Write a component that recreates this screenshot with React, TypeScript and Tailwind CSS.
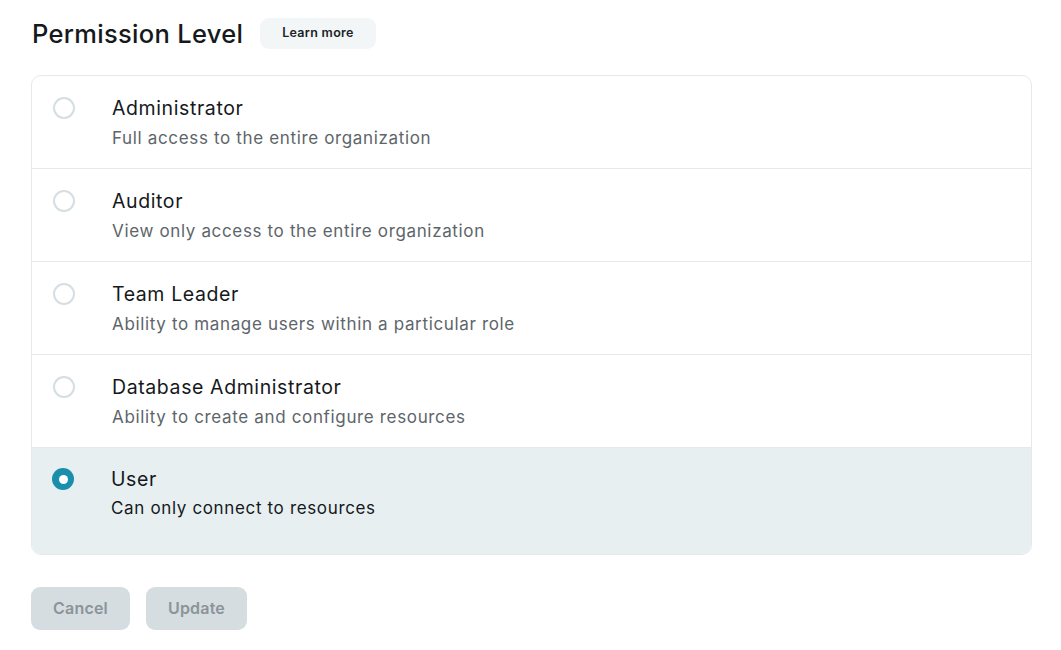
import React from "react";

const options = [
  { title: "Administrator", desc: "Full access to the entire organization" },
  { title: "Auditor", desc: "View only access to the entire organization" },
  { title: "Team Leader", desc: "Ability to manage users within a particular role" },
  { title: "Database Administrator", desc: "Ability to create and configure resources" },
  { title: "User", desc: "Can only connect to resources" },
];

export default function App() {
  const selected = 4;
  return (
    <div
      className="w-[1061px] h-[650px] bg-white pl-[31px] pr-[29px] pt-[18px]"
      style={{ fontFamily: "Inter, 'Noto Sans', sans-serif" }}
    >
      <div className="flex items-center h-[31px] gap-[17px] pl-[1px]">
        <h1 className="text-[25.5px] font-medium text-[#15191c] tracking-[0.3px] leading-none">
          Permission Level
        </h1>
        <button className="h-[31px] px-[22px] rounded-[9px] bg-[#f2f6f7] text-[12.5px] font-semibold text-[#1c2226] tracking-[0.3px]">
          Learn more
        </button>
      </div>

      <div className="mt-[26px] border border-[#e6e9ea] rounded-[10px] overflow-hidden">
        {options.map((o, i) => {
          const isSel = i === selected;
          const isLast = i === options.length - 1;
          return (
            <div
              key={o.title}
              className={`flex ${isLast ? "h-[106px]" : "h-[93px] border-b border-[#e6e9ea]"} ${
                isSel ? "bg-[#e7eff1] pl-[20px]" : "pl-[21px]"
              }`}
            >
              <div className={isSel ? "pt-[20px]" : "pt-[21px]"}>
                {isSel ? (
                  <div className="w-[22px] h-[22px] rounded-full bg-[#1a8fab] flex items-center justify-center">
                    <div className="w-[9px] h-[9px] rounded-full bg-white" />
                  </div>
                ) : (
                  <div className="w-[22px] h-[22px] rounded-full border-2 border-[#d5dee2] bg-white" />
                )}
              </div>
              <div className={isSel ? "ml-[37px] pt-[18px]" : "ml-[37px] pt-[19px]"}>
                <div className="text-[19.5px] leading-[26px] text-[#15191c] tracking-[0.6px]">{o.title}</div>
                <div
                  className={`${isSel ? "mt-[4px]" : "mt-[5px]"} text-[17px] leading-[24px] tracking-[0.65px] ${
                    isSel ? "text-[#15191c]" : "text-[#5d656a]"
                  }`}
                >
                  {o.desc}
                </div>
              </div>
            </div>
          );
        })}
      </div>

      <div className="mt-[32px] flex gap-[16px]">
        <button className="w-[99px] h-[43px] pb-[2px] rounded-[9px] bg-[#d5dde0] text-[16px] font-semibold text-[#8a9499] tracking-[0.2px]">
          Cancel
        </button>
        <button className="w-[101px] h-[43px] pb-[2px] rounded-[9px] bg-[#d5dde0] text-[16px] font-semibold text-[#8a9499] tracking-[0.2px]">
          Update
        </button>
      </div>
    </div>
  );
}
